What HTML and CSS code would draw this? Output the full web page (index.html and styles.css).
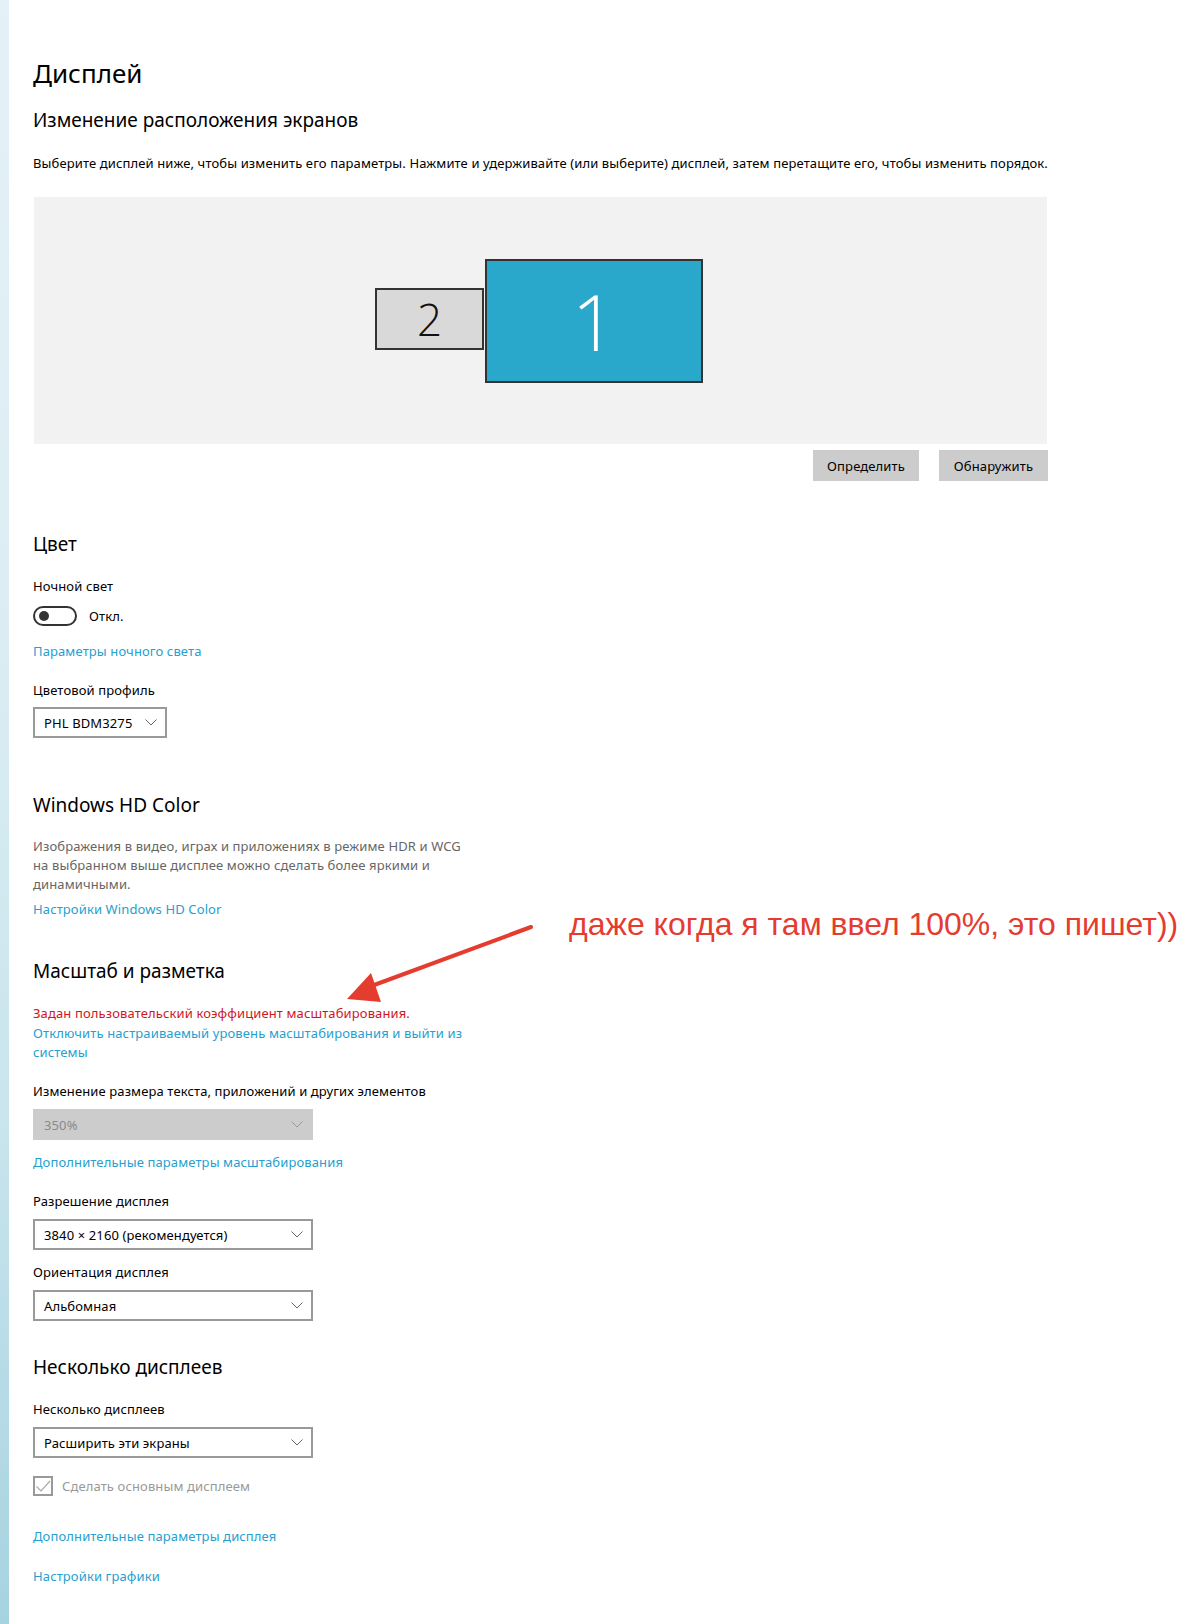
FILE: index.html
```html
<!DOCTYPE html>
<html lang="ru">
<head>
<meta charset="utf-8">
<title>Дисплей</title>
<link rel="stylesheet" href="styles.css">
</head>
<body>
<div class="page">
  <div class="strip"></div>
  <main class="main">
    <h1 class="title">Дисплей</h1>
    <h2 class="h2 h2-first">Изменение расположения экранов</h2>
    <p class="text desc">Выберите дисплей ниже, чтобы изменить его параметры. Нажмите и удерживайте (или выберите) дисплей, затем перетащите его, чтобы изменить порядок.</p>

    <div class="arrange">
      <div class="mon mon2">2</div>
      <div class="mon mon1">1</div>
    </div>
    <div class="btnrow">
      <button class="btn btn-a">Определить</button>
      <button class="btn btn-b">Обнаружить</button>
    </div>

    <h2 class="h2 h2-color">Цвет</h2>
    <p class="text lbl-night">Ночной свет</p>
    <div class="togglerow">
      <span class="toggle"><span class="knob"></span></span>
      <span class="text">Откл.</span>
    </div>
    <a class="text link link-night">Параметры ночного света</a>
    <p class="text lbl-profile">Цветовой профиль</p>
    <div class="select select-small"><span>PHL BDM3275</span><svg class="chev" width="12" height="7" viewBox="0 0 12 7"><path d="M0.5 0.5 L6 6 L11.5 0.5" fill="none" stroke="#666" stroke-width="1"/></svg></div>

    <h2 class="h2 h2-hd">Windows HD Color</h2>
    <p class="text gray hdtext">Изображения в видео, играх и приложениях в режиме HDR и WCG<br>на выбранном выше дисплее можно сделать более яркими и<br>динамичными.</p>
    <a class="text link link-hd">Настройки Windows HD Color</a>

    <h2 class="h2 h2-scale">Масштаб и разметка</h2>
    <p class="text red">Задан пользовательский коэффициент масштабирования.</p>
    <a class="text link link-off">Отключить настраиваемый уровень масштабирования и выйти из<br>системы</a>
    <p class="text lbl-size">Изменение размера текста, приложений и других элементов</p>
    <div class="select select-wide disabled"><span>350%</span><svg class="chev" width="12" height="7" viewBox="0 0 12 7"><path d="M0.5 0.5 L6 6 L11.5 0.5" fill="none" stroke="#999" stroke-width="1"/></svg></div>
    <a class="text link link-adv">Дополнительные параметры масштабирования</a>
    <p class="text lbl-res">Разрешение дисплея</p>
    <div class="select select-wide"><span>3840 × 2160 (рекомендуется)</span><svg class="chev" width="12" height="7" viewBox="0 0 12 7"><path d="M0.5 0.5 L6 6 L11.5 0.5" fill="none" stroke="#666" stroke-width="1"/></svg></div>
    <p class="text lbl-or">Ориентация дисплея</p>
    <div class="select select-wide"><span>Альбомная</span><svg class="chev" width="12" height="7" viewBox="0 0 12 7"><path d="M0.5 0.5 L6 6 L11.5 0.5" fill="none" stroke="#666" stroke-width="1"/></svg></div>

    <h2 class="h2 h2-multi">Несколько дисплеев</h2>
    <p class="text lbl-multi">Несколько дисплеев</p>
    <div class="select select-wide"><span>Расширить эти экраны</span><svg class="chev" width="12" height="7" viewBox="0 0 12 7"><path d="M0.5 0.5 L6 6 L11.5 0.5" fill="none" stroke="#666" stroke-width="1"/></svg></div>
    <div class="checkrow">
      <span class="checkbox"><svg width="16" height="16" viewBox="0 0 16 16"><path d="M1.5 8.5 L6 13 L15 3" fill="none" stroke="#aaa" stroke-width="1.2"/></svg></span>
      <span class="text gray2">Сделать основным дисплеем</span>
    </div>
    <a class="text link link-disp">Дополнительные параметры дисплея</a>
    <a class="text link link-gfx">Настройки графики</a>
  </main>

  <div class="note">даже когда я там ввел 100%, это пишет))</div>
  <svg class="arrow" width="200" height="90" viewBox="0 0 200 90">
    <line x1="195" y1="5" x2="30" y2="66" stroke="#e53c30" stroke-width="4" stroke-linecap="round"/>
    <polygon points="11,77 35,51 45,80" fill="#e53c30"/>
  </svg>
</div>
</body>
</html>
```

FILE: styles.css
```css
html, body {
  margin: 0;
  padding: 0;
  background: #ffffff;
}

.page {
  position: relative;
  display: flex;
  min-height: 1624px;
  font-family: "Noto Sans", "Open Sans", sans-serif;
  color: #000;
}

.strip {
  width: 9px;
  flex: 0 0 9px;
  background: linear-gradient(180deg, #e4f1f6 0%, #dbedf3 40%, #c8e4ed 70%, #a6d3e0 100%);
}

.main {
  flex: 1;
  padding-left: 24px;
  display: flex;
  flex-direction: column;
  align-items: flex-start;
}

.title {
  margin: 54px 0 0 0;
  font-size: 26px;
  font-weight: 400;
  line-height: 38px;
}

.h2 {
  margin: 0;
  font-size: 19px;
  font-weight: 400;
  line-height: 28px;
}

.h2-first { margin-top: 14px; }
.h2-color { margin-top: 49px; }
.h2-hd { margin-top: 53px; }
.h2-scale { margin-top: 38px; }
.h2-multi { margin-top: 32px; }

.text {
  margin: 0;
  font-size: 13px;
  line-height: 20px;
  letter-spacing: 0.12px;
  white-space: nowrap;
}

.desc { margin-top: 19px; }

.arrange {
  position: relative;
  margin-top: 24px;
  margin-left: 1px;
  width: 1013px;
  height: 247px;
  background: #f2f2f2;
}

.mon {
  position: absolute;
  box-sizing: border-box;
  border: 2px solid #333;
  display: flex;
  align-items: center;
  justify-content: center;
  font-family: "Open Sans", "Noto Sans", sans-serif;
  font-weight: 300;
}

.mon2 {
  left: 341px;
  top: 91px;
  width: 109px;
  height: 62px;
  background: #d9d9d9;
  color: #111;
  font-size: 44px;
}

.mon1 {
  left: 451px;
  top: 62px;
  width: 218px;
  height: 124px;
  background: #29a8cc;
  color: #fff;
  font-size: 78px;
}

.btnrow {
  margin-top: 6px;
  width: 1015px;
  display: flex;
  justify-content: flex-end;
  gap: 20px;
}

.btn {
  border: 0;
  padding: 0;
  height: 31px;
  background: #cccccc;
  font-family: "Noto Sans", "Open Sans", sans-serif;
  font-size: 13px;
  letter-spacing: 0.12px;
  color: #000;
}

.btn-a { width: 106px; }
.btn-b { width: 109px; }

.lbl-night { margin-top: 18px; }

.togglerow {
  margin-top: 10px;
  display: flex;
  align-items: center;
  gap: 12px;
  height: 20px;
}

.toggle {
  box-sizing: border-box;
  width: 44px;
  height: 20px;
  border: 2px solid #333;
  border-radius: 10px;
  display: flex;
  align-items: center;
  padding-left: 4px;
}

.knob {
  width: 10px;
  height: 10px;
  border-radius: 50%;
  background: #333;
}

.link {
  color: #25a0d0;
  text-decoration: none;
  display: block;
}

.link-night { margin-top: 15px; }
.lbl-profile { margin-top: 19px; }

.select {
  box-sizing: border-box;
  height: 31px;
  border: 2px solid #999;
  display: flex;
  align-items: center;
  justify-content: space-between;
  padding: 0 8px 0 9px;
  font-size: 13px;
  letter-spacing: 0.12px;
  margin-top: 8px;
  background: #fff;
}

.select span { white-space: nowrap; }

.select-small {
  width: 134px;
  margin-top: 7px;
}

.select-small .chev { margin-left: 8px; }

.select-wide { width: 280px; }

.select.disabled {
  border-color: #ccc;
  background: #cccccc;
  color: #8a8a8a;
}

.gray { color: #666; }
.hdtext { margin-top: 18px; line-height: 19px; }
.link-hd { margin-top: 5px; }

.red { color: #d0161e; margin-top: 19px; line-height: 19px; }
.link-off { margin-top: 1px; line-height: 19px; }
.lbl-size { margin-top: 19px; }
.link-adv { margin-top: 12px; }
.lbl-res { margin-top: 19px; }
.lbl-or { margin-top: 12px; }

.lbl-multi { margin-top: 18px; }

.checkrow {
  margin-top: 18px;
  display: flex;
  align-items: center;
  gap: 9px;
}

.checkbox {
  box-sizing: border-box;
  width: 20px;
  height: 20px;
  border: 2px solid #999;
  display: flex;
  align-items: center;
  justify-content: center;
}

.gray2 { color: #999; }

.link-disp { margin-top: 30px; }
.link-gfx { margin-top: 20px; }

.note {
  position: absolute;
  left: 569px;
  top: 904px;
  font-family: "Liberation Sans", Arial, sans-serif;
  font-size: 32px;
  line-height: 40px;
  color: #e53c30;
  white-space: nowrap;
}

.arrow {
  position: absolute;
  left: 336px;
  top: 922px;
}
```
